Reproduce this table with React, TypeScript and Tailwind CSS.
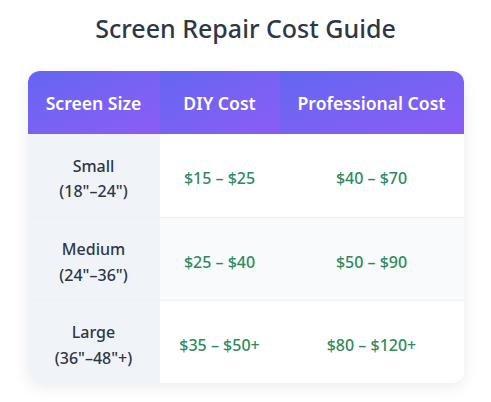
import React from "react";

const rows = [
  { size: "Small", range: "(18\"–24\")", diy: "$15 – $25", pro: "$40 – $70" },
  { size: "Medium", range: "(24\"–36\")", diy: "$25 – $40", pro: "$50 – $90" },
  { size: "Large", range: "(36\"–48\"+)", diy: "$35 – $50+", pro: "$80 – $120+" },
];

export default function App() {
  return (
    <div className="min-h-screen bg-white pt-[12px]" style={{ fontFamily: '"Noto Sans", "Open Sans", sans-serif' }}>
      <h1 className="text-center text-[25px] leading-[32px] font-medium text-[#2d3748]">Screen Repair Cost Guide</h1>

      <div className="mx-auto mt-[27px] w-[436px] rounded-xl overflow-hidden bg-white shadow-[0_4px_16px_rgba(0,0,0,0.08)]">
        <table className="w-full border-collapse text-[16px] leading-[25.6px]">
          <thead>
            <tr className="h-[63px] text-white text-[17.6px]">
              <th className="w-[132px] pt-[3px] bg-gradient-to-br from-[#6366f1] to-[#8b5cf6] font-semibold">Screen Size</th>
              <th className="w-[120px] pt-[3px] bg-gradient-to-br from-[#6366f1] to-[#8b5cf6] font-semibold">DIY Cost</th>
              <th className="pt-[3px] bg-gradient-to-br from-[#6366f1] to-[#8b5cf6] font-semibold">Professional Cost</th>
            </tr>
          </thead>
          <tbody>
            {rows.map((r, i) => (
              <tr
                key={r.size}
                className={`h-[83px] ${i < rows.length - 1 ? "border-b border-[#edf0f4]" : ""} ${i % 2 === 1 ? "bg-[#f8fafc]" : "bg-white"}`}
              >
                <td className="pt-[8px] bg-[#f0f4f8] text-center font-medium text-[#2d3748]">
                  {r.size}
                  <br />
                  {r.range}
                </td>
                <td className="pt-[8px] text-center font-medium text-[#2e8a5e]">{r.diy}</td>
                <td className="pt-[8px] text-center font-medium text-[#2e8a5e]">{r.pro}</td>
              </tr>
            ))}
          </tbody>
        </table>
      </div>
    </div>
  );
}
